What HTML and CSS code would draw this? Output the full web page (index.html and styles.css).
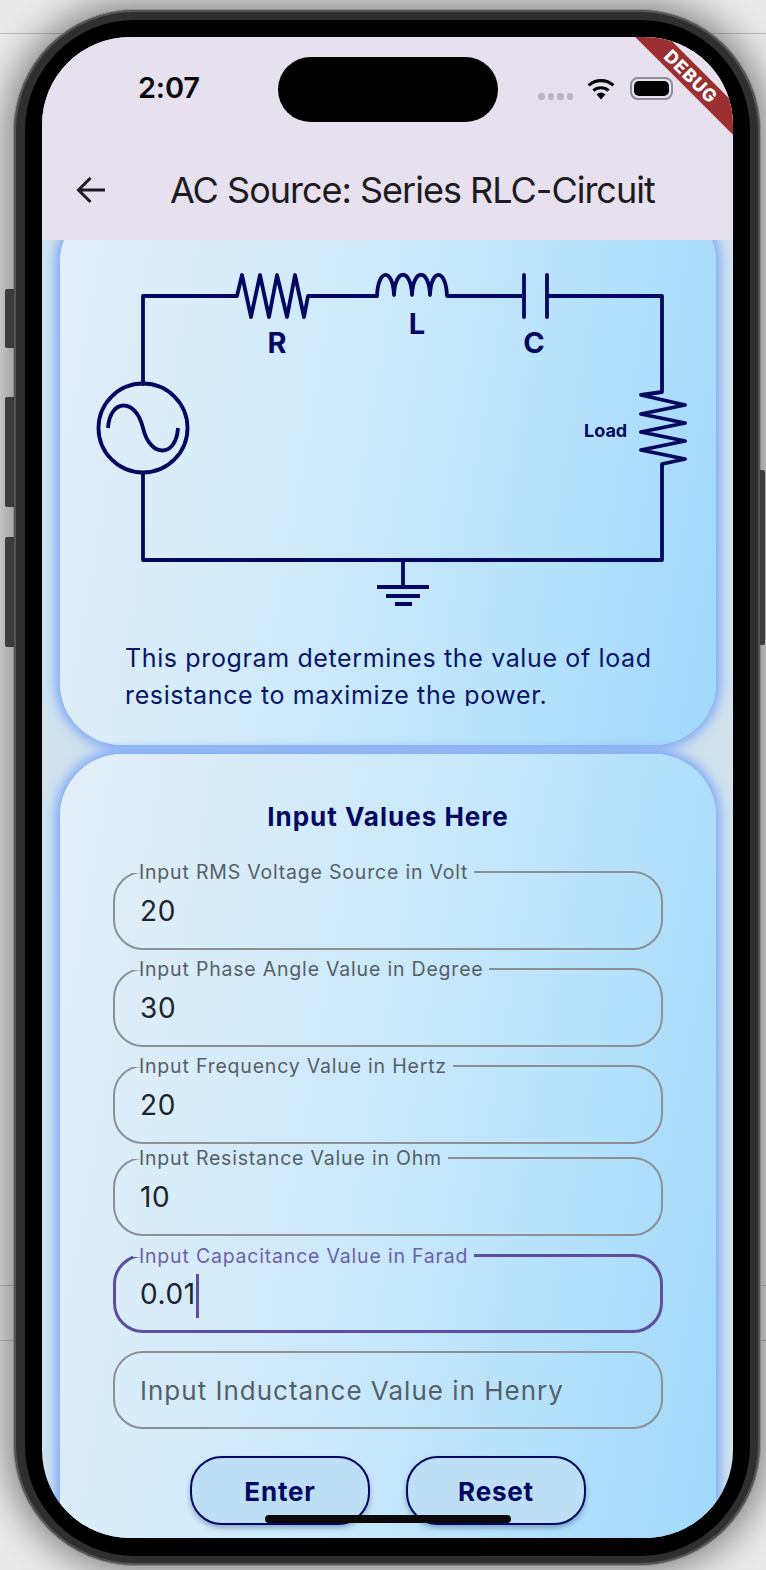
FILE: index.html
```html
<!DOCTYPE html>
<html lang="en">
<head>
<meta charset="utf-8">
<title>AC Source: Series RLC-Circuit</title>
<link rel="stylesheet" href="styles.css">
</head>
<body>
<div class="phone">
  <span class="side side-a"></span>
  <span class="side side-b"></span>
  <span class="side side-c"></span>
  <span class="side side-d"></span>
  <div class="bezel">
    <div class="screen">
      <header class="appbar">
        <div class="status">
          <span class="time">2:07</span>
          <span class="status-right">
            <span class="dots"><i></i><i></i><i></i><i></i></span>
            <svg class="wifi" width="30" height="22" viewBox="0 0 30 22"><path d="M15 21.5 10.6 16.4a7 7 0 0 1 8.8 0Z" fill="#000"/><path d="M7.4 12.6a11.6 11.6 0 0 1 15.2 0" fill="none" stroke="#000" stroke-width="3.2"/><path d="M2.6 7.4a18.6 18.6 0 0 1 24.8 0" fill="none" stroke="#000" stroke-width="3.2"/></svg>
            <span class="battery"><span class="battery-fill"></span></span>
          </span>
        </div>
        <div class="toolbar">
          <svg class="back" width="30" height="28" viewBox="0 0 30 28"><path d="M29 14H3M14.500 2 2.500 14l12 12" fill="none" stroke="#1d1b20" stroke-width="3"/></svg>
          <h1 class="title">AC Source: Series RLC-Circuit</h1>
        </div>
      </header>
      <main class="scroller">
        <section class="card card-top">
          <svg class="circuit" width="656" height="400" viewBox="60 240 656 400">
            <g fill="none" stroke="#03075f" stroke-width="3.800" stroke-linejoin="round" stroke-linecap="round">
              <path d="M143 384V296H237L242 275 251 317 260 275 269 317 277 275 287 317 295 275 304 317 308 296H377"/>
              <path d="M377 296C378 268 393 268 394 295C395 268 411 268 412 295C413 268 429 268 430 295C431 268 446 268 447 296H524"/>
              <path d="M524 275V317M547 275V317"/>
              <path d="M547 296H662V392L641 395 685 405 641 414 685 423 641 432 685 441 641 450 685 459 662 464V560H143V473"/>
              <circle cx="143" cy="428" r="44.500" stroke-width="3.800"/>
              <path d="M108 428C110 398 136 398 143 428C150 458 176 458 178 428" stroke-linecap="butt"/>
              <path d="M403 560V587M377 587H429M386 596H420M395 604H412" stroke-linecap="butt"/>
            </g>
            <text class="lbl" x="277" y="353">R</text>
            <text class="lbl" x="417" y="334">L</text>
            <text class="lbl" x="534" y="353">C</text>
            <text class="lbl-sm" x="584" y="437">Load</text>
          </svg>
          <p class="intro">This program determines the value of load resistance to maximize the power.</p>
        </section>
        <section class="card card-form">
          <h2 class="form-title">Input Values Here</h2>
          <div class="fields">
            <fieldset class="field"><legend>Input RMS Voltage Source in Volt</legend><span class="value">20</span></fieldset>
            <fieldset class="field"><legend>Input Phase Angle Value in Degree</legend><span class="value">30</span></fieldset>
            <fieldset class="field"><legend>Input Frequency Value in Hertz</legend><span class="value">20</span></fieldset>
            <fieldset class="field tight"><legend>Input Resistance Value in Ohm</legend><span class="value">10</span></fieldset>
            <fieldset class="field focused"><legend>Input Capacitance Value in Farad</legend><span class="value">0.01<i class="caret"></i></span></fieldset>
            <fieldset class="field empty"><span class="placeholder">Input Inductance Value in Henry</span></fieldset>
          </div>
          <div class="actions">
            <button class="btn btn-enter" type="button">Enter</button>
            <button class="btn btn-reset" type="button">Reset</button>
          </div>
        </section>
      </main>
      <div class="island"></div>
      <div class="debug">DEBUG</div>
      <div class="home"></div>
    </div>
  </div>
</div>
</body>
</html>
```
FILE: styles.css
```css
* { box-sizing: border-box; }
html, body { margin: 0; height: 100%; }
body {
  width: 766px;
  height: 1570px;
  overflow: hidden;
  padding: 9px 0 0 13px;
  font-family: Inter, "Liberation Sans", sans-serif;
  background:
    linear-gradient(#bdbdbd, #bdbdbd) 0 33px / 100% 1px no-repeat,
    linear-gradient(#bdbdbd, #bdbdbd) 0 1285px / 100% 1px no-repeat,
    linear-gradient(#bdbdbd, #bdbdbd) 0 1340px / 100% 1px no-repeat,
    #e9e9e9;
}
.phone {
  position: relative;
  width: 748px;
  height: 1557px;
  padding: 10px 10px 9px 11px;
  background: #2f2f2f;
  border: 1px solid #8a8a8a;
  border-radius: 122px;
  box-shadow: 0 0 34px 8px rgba(0, 0, 0, .42), inset 0 0 0 2px #555;
}
.side { position: absolute; width: 9px; background: #3c3c3c; border-radius: 2px 0 0 2px; }
.side-a { left: -9px; top: 279px; height: 59px; }
.side-b { left: -9px; top: 387px; height: 110px; }
.side-c { left: -9px; top: 527px; height: 110px; }
.side-d { left: auto; right: -5px; top: 460px; height: 175px; width: 5px; border-radius: 0 2px 2px 0; }
.bezel {
  height: 100%;
  padding: 17px 17px 18px;
  background: #000;
  border-radius: 110px;
}
.screen {
  position: relative;
  display: flex;
  flex-direction: column;
  height: 100%;
  overflow: hidden;
  background: #cfe2ee;
  border-radius: 88px;
}
.appbar { flex: none; height: 203px; background: #e6e0ef; }
.status {
  display: flex;
  justify-content: space-between;
  height: 123px;
  padding: 32px 60px 0 96px;
}
.time { font-size: 29px; font-weight: 600; line-height: 38px; color: #0b0b0b; letter-spacing: -.2px; }
.status-right { display: flex; align-items: flex-start; }
.dots { display: flex; gap: 3px; margin: 24px 13px 0 0; }
.dots i { width: 6.500px; height: 6.500px; border-radius: 50%; background: #b9b6c1; }
.wifi { margin: 9px 14px 0 0; }
.battery {
  position: relative;
  width: 43px;
  height: 23px;
  margin-top: 8px;
  padding: 2px;
  border: 2px solid #8d8b93;
  border-radius: 8px;
}
.battery-fill { display: block; height: 100%; background: #000; border-radius: 5px; }
.toolbar { display: flex; align-items: center; height: 62px; padding-left: 34px; margin-top: -1px; }
.back { flex: none; }
.title {
  margin: 0 0 0 64px;
  font-size: 36px;
  font-weight: 400;
  line-height: 50px;
  color: #1d1b20;
  letter-spacing: -1px;
  white-space: nowrap;
}
.scroller { flex: 1; min-height: 0; overflow: hidden; padding: 0 17px 0 18px; }
.card {
  background: linear-gradient(100deg, #e4eff7 0%, #c9e9fc 50%, #9fd8fa 100%);
  border-radius: 62px;
  box-shadow: 0 0 12px 4px #7ba5f6;
}
.card-top { margin-top: -40px; padding: 40px 0 39px; }
.circuit { display: block; }
.lbl { font-size: 29px; font-weight: 700; fill: #03075f; text-anchor: middle; }
.lbl-sm { font-size: 18px; font-weight: 700; fill: #03075f; }
.intro {
  height: 66px;
  margin: 0 50px 0 65px;
  overflow: hidden;
  font-size: 25px;
  line-height: 37px;
  letter-spacing: .63px;
  color: #0a1566;
}
.card-form { margin-top: 9px; padding: 47px 53px 60px; }
.form-title {
  margin: 0 0 38px;
  font-size: 26px;
  font-weight: 700;
  line-height: 32px;
  text-align: center;
  color: #03075f;
  letter-spacing: 1px;
}
.fields { display: flex; flex-direction: column; }
.field {
  height: 79px;
  margin: 0 0 18px;
  padding: 0;
  min-width: 0;
  border: 2px solid #8c9094;
  border-radius: 30px;
}
.field.tight { margin-top: -5px; }
.field.focused { border: 3px solid #5d4f9e; }
.field.empty { height: 78px; margin-bottom: 0; }
.field legend {
  height: 2px;
  margin-left: 18px;
  padding: 0 6px;
  font-size: 19.500px;
  line-height: 2px;
  letter-spacing: .8px;
  color: #565e68;
  white-space: nowrap;
}
.field.focused legend { margin-left: 17px; color: #6c60a9; }
.value {
  display: block;
  padding-left: 25px;
  font-size: 28px;
  line-height: 77px;
  letter-spacing: .6px;
  color: #20242a;
}
.focused .value { padding-left: 24px; line-height: 74px; }
.caret {
  display: inline-block;
  width: 3px;
  height: 44px;
  vertical-align: middle;
  background: #5d4f9e;
}
.placeholder {
  display: block;
  padding-left: 25px;
  font-size: 26px;
  line-height: 75px;
  letter-spacing: 1px;
  color: #565e68;
}
.actions { display: flex; justify-content: center; gap: 36px; margin-top: 27px; }
.btn {
  width: 180px;
  height: 69px;
  padding: 2px 0 0;
  border: 2.500px solid #03075f;
  border-radius: 32px;
  background: #bcdff6;
  box-shadow: 0 3px 5px rgba(20, 50, 110, .35);
  font-family: inherit;
  font-size: 26px;
  font-weight: 700;
  letter-spacing: .8px;
  color: #03075f;
}
.island {
  position: absolute;
  top: 20px;
  left: 236px;
  width: 220px;
  height: 65px;
  border-radius: 33px;
  background: #000;
}
.debug {
  position: absolute;
  top: 28px;
  left: 549px;
  width: 200px;
  height: 23px;
  transform: rotate(45deg);
  background: #9c2f2f;
  color: #fff;
  font-size: 18px;
  font-weight: 800;
  line-height: 23px;
  text-align: center;
  letter-spacing: .8px;
}
.home {
  position: absolute;
  left: 223px;
  bottom: 15px;
  width: 246px;
  height: 8px;
  border-radius: 4px;
  background: #0a0a0a;
}
```
